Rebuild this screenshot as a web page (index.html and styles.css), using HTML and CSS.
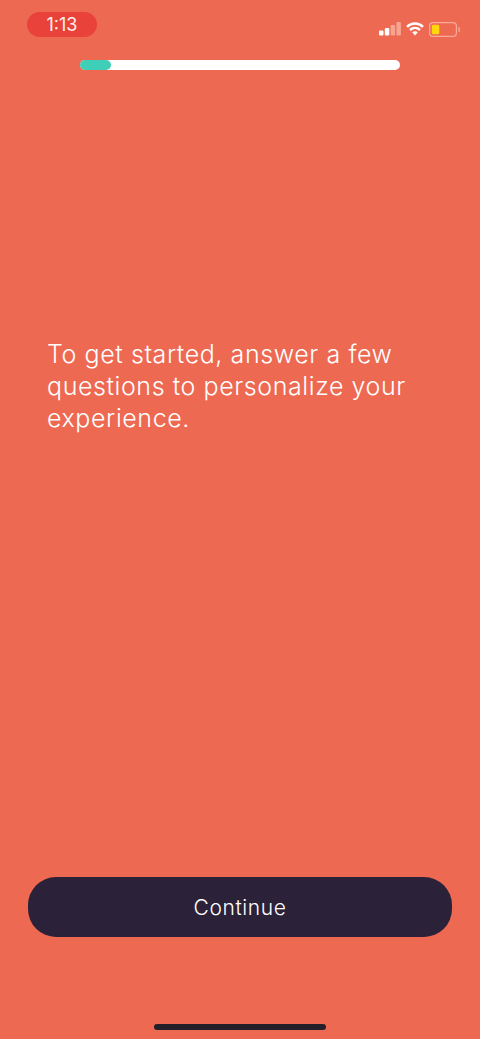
FILE: index.html
```html
<!DOCTYPE html>
<html lang="en">
<head>
<meta charset="utf-8">
<title>Get started</title>
<link rel="stylesheet" href="styles.css">
</head>
<body>
<main class="screen">
  <header class="status">
    <div class="time">1:13</div>
    <div class="status-icons">
      <svg class="signal" width="22" height="14" viewBox="0 0 22 14"><rect x="0" y="8.500" width="4.500" height="5" rx="1" fill="#fff"/><rect x="5.800" y="6" width="4.500" height="7.500" rx="1" fill="#fff"/><rect x="11.600" y="3" width="4.500" height="10.500" rx="1" fill="#f7a492"/><rect x="17.400" y="0" width="4.500" height="13.500" rx="1" fill="#f7a492"/></svg>
      <svg class="wifi" width="18" height="14" viewBox="0 0 18 14"><path d="M1 4.800C5.500 .4 12.500 .4 17 4.800" fill="none" stroke="#fff" stroke-width="2.400"/><path d="M4 8C7 5.300 11 5.300 14 8" fill="none" stroke="#fff" stroke-width="2.400"/><path d="M6.200 10.300 9 13.600l2.800-3.300C10 8.900 8 8.900 6.200 10.300Z" fill="#fff"/></svg>
      <svg class="battery" width="31" height="15" viewBox="0 0 31 15"><rect x=".6" y=".6" width="26.800" height="13.800" rx="3.500" fill="none" stroke="#f9ab98" stroke-width="1.200"/><rect x="2.800" y="2.800" width="7.500" height="9.400" rx="1.500" fill="#ffd60a"/><rect x="29.400" y="5" width="1.400" height="5" rx=".7" fill="#f9ab98"/></svg>
    </div>
  </header>
  <div class="progress"><div class="progress-fill"></div></div>
  <p class="intro">To get started, answer a few questions to personalize your experience.</p>
  <button class="continue" type="button">Continue</button>
  <div class="home-bar"></div>
</main>
</body>
</html>
```
FILE: styles.css
```css
* { box-sizing: border-box; }
html, body { margin: 0; padding: 0; }
body { background: #ee6952; }
.screen {
  height: 1039px;
  width: 480px;
  overflow: hidden;
  display: flex;
  flex-direction: column;
  background: #ee6952;
  font-family: "Inter", "Lato", sans-serif;
  font-weight: 300;
  color: #fff;
}
.status {
  display: flex;
  justify-content: space-between;
  align-items: center;
  padding: 12px 20px 0 27px;
  height: 37px;
}
.time {
  width: 70px;
  height: 25px;
  border-radius: 13px;
  background: #e8423a;
  color: #fdeeea;
  font-weight: 400;
  font-size: 18px;
  line-height: 25px;
  text-align: center;
}
.status-icons { display: flex; align-items: center; gap: 5px; margin-top: 9px; }
.progress {
  margin: 23px 0 0 80px;
  width: 320px;
  height: 10px;
  border-radius: 5px;
  background: #fff;
}
.progress-fill {
  width: 31px;
  height: 10px;
  border-radius: 5px;
  background: #3fcfb8;
}
.intro {
  margin: 268px 0 0;
  padding: 0 47px;
  font-size: 25px;
  font-weight: 350;
  line-height: 32px;
  letter-spacing: 0.580px;
  color: #fff;
}
.continue {
  margin: 443px 0 0 28px;
  padding: 1px 0 0;
  width: 424px;
  height: 60px;
  border: 0;
  border-radius: 28px;
  background: #2b2138;
  color: #fff;
  font-family: inherit;
  font-weight: 350;
  font-size: 21px;
  letter-spacing: 0.600px;
}
.home-bar {
  margin: 87px 0 0 154px;
  width: 172px;
  height: 6px;
  border-radius: 3px;
  background: #24202a;
}
```
